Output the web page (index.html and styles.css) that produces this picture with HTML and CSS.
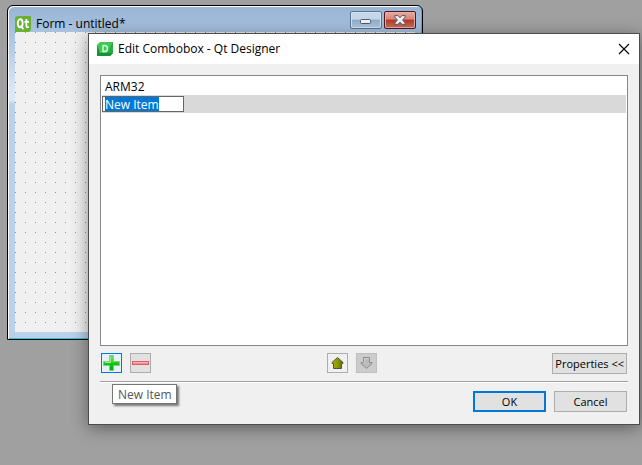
FILE: index.html
```html
<!DOCTYPE html>
<html lang="en">
<head>
<meta charset="utf-8">
<title>Qt Designer</title>
<link rel="stylesheet" href="styles.css">
</head>
<body>
<main class="desktop">
  <section class="form-window" aria-label="Form">
    <header class="form-title">
      <svg class="app-icon" viewBox="0 0 16 16" aria-hidden="true">
        <path fill="#68b133" d="M2 0H16V14L14 16H0V2Z"/>
        <ellipse cx="5.2" cy="7.2" rx="2.4" ry="4" fill="none" stroke="#fff" stroke-width="1.9"/>
        <path d="M5.6 9.5L8.4 13.2M11.4 3V10Q11.4 11.6 14 11.1M9.4 5.8H14" fill="none" stroke="#fff" stroke-width="1.8"/>
      </svg>
      <h1 class="caption">Form - untitled*</h1>
      <div class="window-buttons">
        <button class="win-btn minimize" type="button" aria-label="Minimize">
          <svg width="12" height="6" viewBox="0 0 12 6"><rect x=".5" y=".5" width="10" height="4" rx="1" fill="#f2f2f2" stroke="#515a6b"/></svg>
        </button>
        <button class="win-btn close" type="button" aria-label="Close form">
          <svg width="12" height="10" viewBox="0 0 12 10"><path d="M.8 .6H4L6 2.8L8 .6H11.2V2L8.6 5L11.2 8V9.4H8L6 7.2L4 9.4H.8V8L3.4 5L.8 2Z" fill="#f2f2f2" stroke="#515a6b"/></svg>
        </button>
      </div>
    </header>
    <div class="form-canvas"></div>
  </section>

  <section class="dialog" role="dialog" aria-labelledby="dialog-title">
    <header class="dialog-title">
      <svg class="app-icon" viewBox="0 0 16 16" aria-hidden="true">
        <path fill="#3fc953" d="M3 1H16V12L13 15H0V4Z"/>
        <path fill="#149235" d="M0 4L3 12H16L13 15H0Z"/>
        <path fill="#27ad43" d="M16 1V12H10Z"/>
        <path d="M6 4.5V10.5H7.5Q10.4 10.5 10.4 7.5T7.5 4.5Z" fill="none" stroke="#d9ffe0" stroke-width="1.4"/>
      </svg>
      <h2 class="caption" id="dialog-title">Edit Combobox - Qt Designer</h2>
      <button class="dialog-close" type="button" aria-label="Close">
        <svg width="12" height="12" viewBox="0 0 12 12"><path d="M1 1L11 11M11 1L1 11" stroke="#000" stroke-width="1.1"/></svg>
      </button>
    </header>
    <div class="dialog-body">
      <ul class="item-list">
        <li class="item">ARM32</li>
        <li class="item selected">
          <label class="editor"><input class="editor-input" type="text" value="New Item" aria-label="Item text" size="8"></label>
        </li>
      </ul>
      <div class="toolbar">
        <div class="group">
          <button class="tool hot" type="button" aria-label="New Item" aria-describedby="tip">
            <svg width="17" height="16" viewBox="0 0 17 16">
              <defs><linearGradient id="plus" x2="0" y2="1"><stop stop-color="#72dd72"/><stop offset=".4" stop-color="#35d72d"/><stop offset=".55" stop-color="#0fc40c"/><stop offset="1" stop-color="#08a808"/></linearGradient></defs>
              <path d="M6.5 .5H10.5V6.5H16.5V10.5H10.5V15.5H6.5V10.5H.5V6.5H6.5Z" fill="url(#plus)" stroke="#7fce86"/>
              <path d="M7.5 8V2M2 7.5H7.5" fill="none" stroke="#9af092"/>
            </svg>
          </button>
          <button class="tool" type="button" aria-label="Delete Item">
            <svg width="17" height="16" viewBox="0 0 17 16"><rect x=".5" y="6.5" width="16" height="3" fill="#f68b8e" stroke="#dc5e64"/><path d="M1 7.5H16" stroke="#ffb0b0"/></svg>
          </button>
        </div>
        <div class="group">
          <button class="tool light" type="button" aria-label="Move Item Up">
            <svg width="17" height="16" viewBox="0 0 17 16">
              <defs><linearGradient id="up"><stop stop-color="#a9b500"/><stop offset=".5" stop-color="#8c9800"/><stop offset="1" stop-color="#626a00"/></linearGradient></defs>
              <path d="M8.5 2.5L14 7.5V8.5H12.5V13.5H4.5V8.5H3V7.5Z" fill="url(#up)" stroke="#55534a"/>
            </svg>
          </button>
          <button class="tool off" type="button" aria-label="Move Item Down" disabled>
            <svg width="17" height="16" viewBox="0 0 17 16"><path d="M5.5 2.5H11.5V7.5H14V8.5L8.5 13.5L3 8.5V7.5H5.5Z" fill="#bbb" stroke="#8c8c8c"/><path d="M6.5 8V3.5H11" fill="none" stroke="#d4d4d4"/></svg>
          </button>
        </div>
        <button class="push" type="button">Properties &lt;&lt;</button>
      </div>
      <hr class="rule">
      <div class="actions">
        <button class="push default" type="button">OK</button>
        <button class="push" type="button">Cancel</button>
      </div>
    </div>
    <div class="tooltip" id="tip" role="tooltip">New Item</div>
  </section>
</main>
<script>
  const field = document.querySelector(".editor-input");
  field.focus();
  field.select();
</script>
</body>
</html>
```

FILE: styles.css
```css
* { box-sizing: border-box; }

body {
  margin: 0;
  font: 12px/20px "Open Sans", "Noto Sans", sans-serif;
  color: #000;
}

button, input { font: inherit; color: inherit; }
button { padding: 0; }
svg { display: block; flex: none; }

.desktop {
  position: relative;
  min-height: 100vh;
  background: #a0a0a0;
  overflow: hidden;
}

.form-window {
  position: absolute;
  inset: 5px 219px 125px 7px;
  display: flex;
  flex-direction: column;
  padding: 1px 7px 7px;
  border: 1px solid #000;
  border-radius: 6px 6px 0 0;
  background: linear-gradient(#9ab5d4, #a9c3e0 28px, #d6e5f5 80px, #dce9f7 94px, #b9d1ea 98px);
  box-shadow: inset 1px 1px #fff, inset -1px -1px #27c4dc;
}

.form-title {
  display: flex;
  align-items: center;
  gap: 5px;
  height: 25px;
  padding-top: 8px;
}

.app-icon { width: 16px; height: 16px; }
.caption { margin: 0; font-size: 12px; font-weight: 400; white-space: nowrap; }

.window-buttons {
  display: flex;
  gap: 2px;
  margin: 0 -1px 3px auto;
  align-self: flex-end;
}

.win-btn {
  display: grid;
  place-items: center;
  width: 32px;
  height: 18px;
  border: 1px solid #5b7394;
  border-radius: 2px;
  box-shadow: inset 0 0 0 1px #d5e3f1;
}
.minimize { padding-top: 4px; background: linear-gradient(#c5d8eb 45%, #8faccb 50%, #b4cce4); }
.close {
  border-color: #4d1821;
  background: linear-gradient(#e7aaa0, #d98578 45%, #b43820 50%, #cf7160);
  box-shadow: inset 0 0 0 1px #e8b0a7;
}

.form-canvas {
  flex: 1;
  background: #f0f0f0 radial-gradient(circle at 0 0, #909090 1px, transparent 1px) 0 0 / 10px 10px;
}

.dialog {
  position: absolute;
  inset: 33px 2px 40px 88px;
  display: flex;
  flex-direction: column;
  border: 1px solid #4d4d4d;
  background: #f0f0f0;
  box-shadow: 0 3px 16px rgba(0, 0, 0, .42);
}

.dialog-title {
  display: flex;
  align-items: center;
  gap: 5px;
  height: 30px;
  padding: 0 9px 0 8px;
  background: #fff;
}

.dialog-close {
  margin-left: auto;
  border: 0;
  background: none;
}

.dialog-body {
  flex: 1;
  display: flex;
  flex-direction: column;
  padding: 11px 11px 12px;
}

.item-list {
  flex: 1;
  margin: 0;
  padding: 1px;
  border: 1px solid #828790;
  background: #fff;
  list-style: none;
}
.item { height: 18px; padding-left: 3px; }
.selected { padding: 1px 0 0; background: #d9d9d9; }

.editor {
  display: block;
  width: 82px;
  height: 16px;
  padding: 1px 0 0 2px;
  border: 1px solid #646464;
  background: #fff;
  overflow: hidden;
}
.editor-input {
  display: block;
  width: 100%;
  height: 15px;
  padding: 0;
  border: 0;
  outline: 0;
  background: none;
}
.editor-input::selection { background: #0078d7; color: #fff; }

.toolbar {
  display: flex;
  justify-content: space-between;
  padding: 7px 1px;
}
.group { display: flex; gap: 8px; }

.tool {
  display: grid;
  place-items: center;
  width: 21px;
  height: 20px;
  border: 1px solid #adadad;
  background: #e1e1e1;
}
.hot { border-color: #0078d7; background: #e5f1fb; }
.light { background: #f0f0f0; }
.off { border-color: #bfbfbf; background: #ccc; }

.push {
  min-width: 73px;
  height: 21px;
  padding: 0 2px;
  border: 1px solid #adadad;
  background: #e1e1e1;
  font-size: 11px;
  line-height: 18px;
}
.default { border: 2px solid #0078d7; }

.rule {
  width: 100%;
  height: 2px;
  margin: 0;
  border: solid #a0a0a0;
  border-width: 1px 0 0;
  background: #fff;
}

.actions {
  display: flex;
  justify-content: flex-end;
  gap: 8px;
  padding: 8px 1px 0;
}

.tooltip {
  position: absolute;
  left: 23px;
  bottom: 20px;
  height: 20px;
  padding: 0 4px 0 5px;
  border: 1px solid #767676;
  background: #fff;
  color: #575757;
  box-shadow: 2px 2px 2px rgba(0, 0, 0, .5);
}
```
